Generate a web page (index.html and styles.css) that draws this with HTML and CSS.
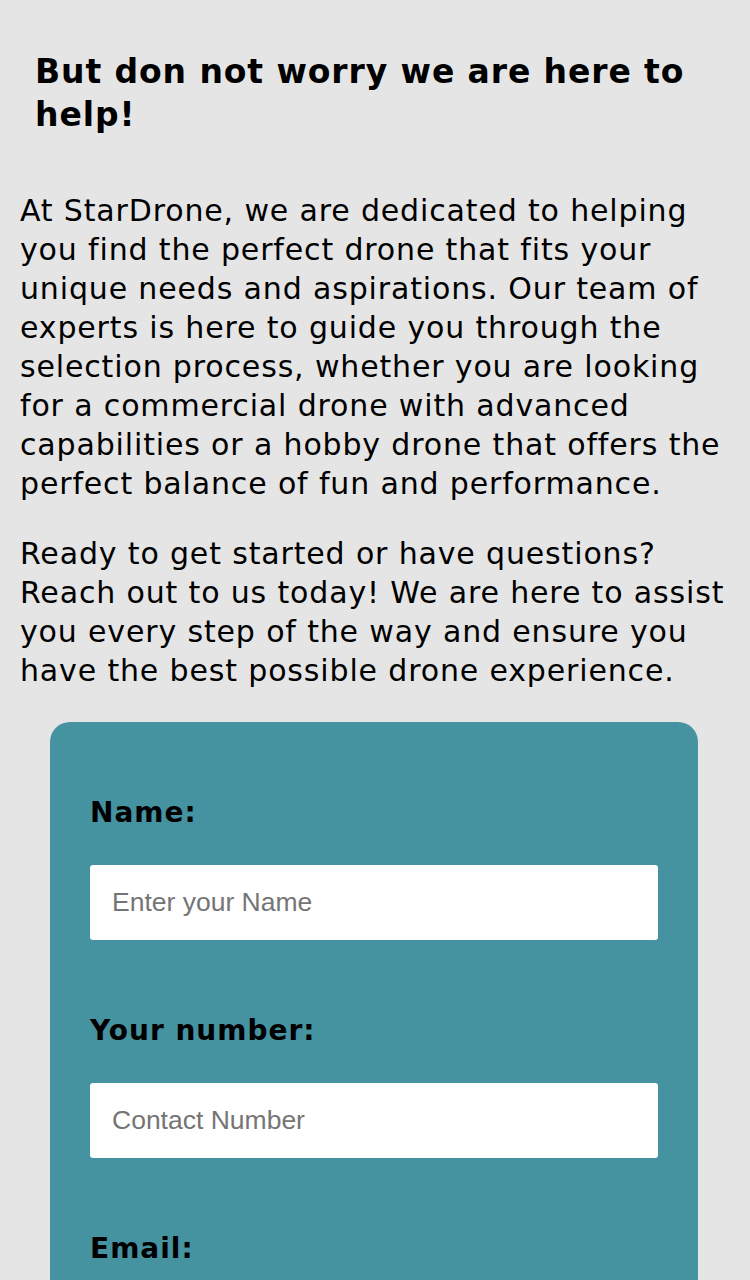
FILE: index.html
```
<!DOCTYPE html>
<html lang="en">
<head>
<meta charset="utf-8">
<title>StarDrone - Contact</title>
<link rel="stylesheet" href="styles.css">
</head>
<body>
<main class="page">
  <h1 class="title">But don not worry we are here to help!</h1>
  <p class="text">At StarDrone, we are dedicated to helping you find the perfect drone that fits your unique needs and aspirations. Our team of experts is here to guide you through the selection process, whether you are looking for a commercial drone with advanced capabilities or a hobby drone that offers the perfect balance of fun and performance.</p>
  <p class="text text-second">Ready to get started or have questions? Reach out to us today! We are here to assist you every step of the way and ensure you have the best possible drone experience.</p>
  <form class="card">
    <div class="field">
      <label class="label" for="name">Name:</label>
      <input class="input" id="name" type="text" placeholder="Enter your Name">
    </div>
    <div class="field">
      <label class="label" for="num">Your number:</label>
      <input class="input" id="num" type="text" placeholder="Contact Number">
    </div>
    <div class="field">
      <label class="label" for="email">Email:</label>
      <input class="input" id="email" type="email" placeholder="Enter your Email">
    </div>
  </form>
</main>
</body>
</html>
```
FILE: styles.css
```
html, body {
  margin: 0;
  padding: 0;
  background: #e5e5e5;
}
body {
  font-family: "DejaVu Sans", sans-serif;
  color: #000;
}
.page {
  padding: 0 20px;
}
.title {
  margin: 50px 0 0;
  padding: 0 15px;
  font-size: 33px;
  line-height: 43px;
  font-weight: bold;
  letter-spacing: 0.9px;
}
.text {
  margin: 55px 0 0;
  font-size: 30px;
  line-height: 39px;
  letter-spacing: 0.85px;
}
.text-second {
  margin-top: 31px;
}
.card {
  margin: 32px 32px 0 30px;
  background: #4592a0;
  border-radius: 20px 20px 0 0;
  padding: 74px 40px 40px;
  display: flex;
  flex-direction: column;
  gap: 74px;
}
.field {
  display: flex;
  flex-direction: column;
  gap: 35px;
}
.label {
  font-size: 28px;
  line-height: 34px;
  font-weight: bold;
  letter-spacing: 1px;
}
.input {
  height: 75px;
  box-sizing: border-box;
  border: none;
  border-radius: 3px;
  background: #fff;
  padding: 0 22px;
  font-family: "Liberation Sans", Arial, sans-serif;
  font-size: 26.5px;
  color: #333;
  outline: none;
}
.input::placeholder {
  color: #757575;
}
```
